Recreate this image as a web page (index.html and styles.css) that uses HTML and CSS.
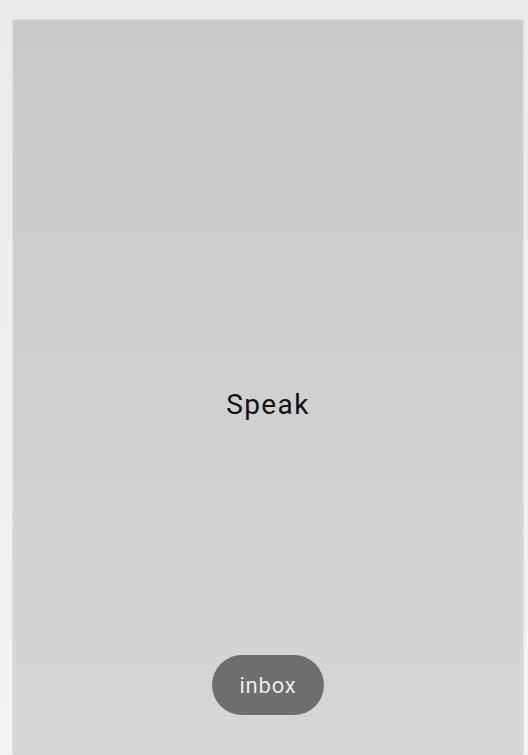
FILE: index.html
```html
<!DOCTYPE html>
<html>
<head>
<meta charset="utf-8">
<link rel="stylesheet" href="styles.css">
</head>
<body>
<div class="card">
  <div class="title">Speak</div>
  <button class="action">inbox</button>
</div>
</body>
</html>
```
FILE: styles.css
```css
html, body {
  margin: 0;
  height: 100%;
}
body {
  background: linear-gradient(#ebebeb, #f3f3f3);
  font-family: Roboto, "Noto Sans", sans-serif;
  overflow: hidden;
  padding: 20px 5px 0 13px;
  box-sizing: border-box;
}
.card {
  height: 735px;
  background: linear-gradient(#cacaca, #d6d6d6);
  box-shadow: 0 0 2px rgba(0,0,0,0.18);
  display: flex;
  flex-direction: column;
  align-items: center;
}
.title {
  margin-top: 369px;
  font-size: 28px;
  line-height: 32px;
  letter-spacing: 1.4px;
  color: #111;
}
.action {
  margin-top: auto;
  margin-bottom: 40px;
  width: 112px;
  height: 60px;
  border: none;
  border-radius: 30px;
  background: #6e6e6e;
  color: #ececec;
  font-family: Roboto, "Noto Sans", sans-serif;
  font-size: 22px;
  letter-spacing: 0.8px;
  padding: 0;
}
```
